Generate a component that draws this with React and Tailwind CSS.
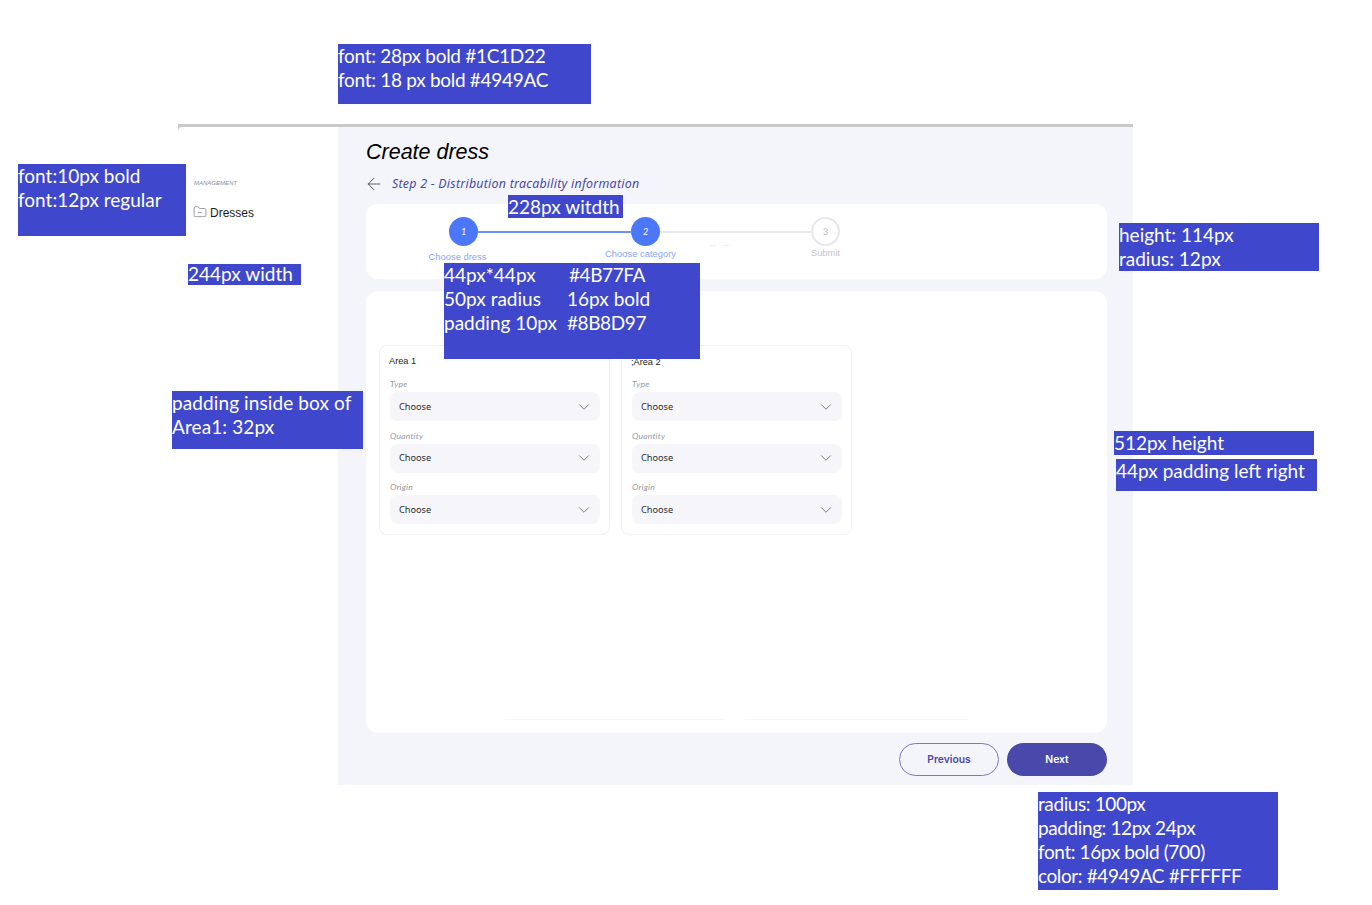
import React from "react";
import { ArrowLeft, ChevronDown, FolderMinus } from "lucide-react";

const notes = [
  { c: "left-[338px] top-[44px] w-[253px] h-[60px] leading-[24px]", t: ["font: 28px bold #1C1D22", "font: 18 px bold #4949AC"], k: "tracking-[-0.3px]" },
  { c: "left-[18px] top-[164px] w-[168px] h-[72px] leading-[24px]", t: ["font:10px bold", "font:12px regular"] },
  { c: "left-[188px] top-[264px] w-[113px] h-[21px] leading-[20px]", t: ["244px width"] },
  { c: "left-[508px] top-[195px] w-[115px] h-[23px] leading-[23px]", t: ["228px witdth"] },
  { c: "left-[172px] top-[391px] w-[191px] h-[58px] leading-[24px]", t: ["padding inside box of", "Area1: 32px"], k: "tracking-[0.1px]" },
  { c: "left-[1119px] top-[223px] w-[200px] h-[48px] leading-[24px]", t: ["height: 114px", "radius: 12px"] },
  { c: "left-[1114px] top-[431px] w-[200px] h-[24px] leading-[24px]", t: ["512px height"] },
  { c: "left-[1116px] top-[459px] w-[201px] h-[32px] leading-[24px]", t: ["44px padding left right"] },
  { c: "left-[1038px] top-[792px] w-[240px] h-[98px] leading-[24px]", t: ["radius: 100px", "padding: 12px 24px", "font: 16px bold (700)", "color: #4949AC #FFFFFF"], k: "tracking-[-0.4px]" },
];

const noteBase = "absolute z-10 bg-[#3f48cc] text-white text-[19px] whitespace-pre font-['Lato',sans-serif]";

function Note({ c, t, k = "" }) {
  return (
    <div className={`${noteBase} ${k} ${c}`}>
      {t.map((l) => (
        <div key={l}>{l}</div>
      ))}
    </div>
  );
}

function Field({ label, last }) {
  return (
    <div className={last ? "" : "mb-[10.5px]"}>
      <div className="text-[8.5px] leading-[8px] italic text-[#96979f] font-['Lato',sans-serif] h-[12px] tracking-[0.2px]">{label}</div>
      <div className="flex items-center justify-between h-[29px] -mr-[1px] rounded-lg bg-[#f5f5fa] pl-[9px] pr-[7px]">
        <span className="text-[9.2px] text-[#2c2d33] font-['Noto_Sans',sans-serif]">Choose</span>
        <ChevronDown size={18} strokeWidth={1} className="text-[#53545c]" />
      </div>
    </div>
  );
}

function Area({ title, titleClass }) {
  return (
    <div className="w-[231px] h-[190px] rounded-lg border border-[#f1f1f4] bg-white px-[10px]">
      <div className={`text-[9.2px] leading-[11px] text-[#1c1d22] font-['Liberation_Sans',sans-serif] h-[34px] -ml-[1px] ${titleClass}`}>{title}</div>
      <Field label="Type" />
      <Field label="Quantity" />
      <Field label="Origin" last />
    </div>
  );
}

function Step({ n, label, state, labelClass }) {
  const active = state === "active";
  return (
    <div className="relative w-[29px] flex flex-col items-center">
      <div
        className={
          active
            ? "w-[29px] h-[29px] rounded-full bg-[#4b77fa] text-white flex items-center justify-center text-[9px] italic font-['Lato',sans-serif]"
            : "w-[29px] h-[29px] rounded-full border-2 border-[#e7e7ee] bg-white text-[#b9bac2] flex items-center justify-center text-[9px] font-['Lato',sans-serif]"
        }
      >
        {n}
      </div>
      <div className={`whitespace-nowrap text-[9.4px] leading-[10px] font-['Liberation_Sans',sans-serif] ${active ? "text-[#8aa5fb]" : "text-[#c4c5cc]"} ${labelClass}`}>
        {label}
      </div>
    </div>
  );
}

export default function App() {
  return (
    <div className="relative w-[1372px] h-[905px] bg-white overflow-hidden pt-[124px] pl-[178px]">
      {notes.map((n, i) => (
        <Note key={i} {...n} />
      ))}
      <div className={`${noteBase} leading-[24px] left-[444px] top-[263px] w-[256px] h-[96px]`}>
        <div>44px*44px<span className="absolute left-[125px] tracking-[-0.4px]">#4B77FA</span></div>
        <div>50px radius<span className="absolute left-[123px]">16px bold</span></div>
        <div>padding 10px<span className="absolute left-[123px] tracking-[-0.4px]">#8B8D97</span></div>
      </div>
      <div className="w-[955px] h-[3px] bg-[#c9c9c9]" />
      <div className="flex w-[955px] h-[658px] bg-[#d8d8d8]">
        <aside className="w-[160px] bg-white rounded-tl-[5px] pl-[16px] pt-[53px]">
          <div className="text-[6px] leading-[7px] italic text-[#8b8d97] font-['Liberation_Sans',sans-serif]">MANAGEMENT</div>
          <div className="flex items-center gap-[3px] -ml-[1px] mt-[19px] text-[12px] leading-[14px] text-[#1c1d22] font-['Liberation_Sans',sans-serif]">
            <FolderMinus size={14} strokeWidth={1.1} className="text-[#6b6c74] -mt-[3px]" />
            <span>Dresses</span>
          </div>
        </aside>
        <main className="w-[795px] bg-[#f4f5fa] pl-[28px] pr-[26px]">
          <h1 className="pt-[11px] text-[21.5px] leading-[28px] italic text-black font-['Liberation_Sans',sans-serif]">Create dress</h1>
          <div className="flex items-center gap-[8px] -ml-[2px] mt-[9px] h-[18px]">
            <ArrowLeft size={20} strokeWidth={1} className="text-[#44454c]" />
            <span className="text-[12.4px] italic tracking-[0.25px] whitespace-pre text-[#4949ac] font-['Noto_Sans',sans-serif]">Step 2 - Distribution tracability information</span>
          </div>
          <section className="mt-[11px] h-[75px] rounded-xl bg-white pl-[83px] pt-[13px] relative">
            <div className="flex items-start">
              <Step n="1" label="Choose dress" state="active" labelClass="mt-[6px] -translate-x-[6px]" />
              <div className="w-[153px] h-[2px] mt-[14px] bg-[#6c90fb]" />
              <Step n="2" label="Choose category" state="active" labelClass="mt-[3px] -translate-x-[5px]" />
              <div className="w-[151px] h-[2px] mt-[14px] bg-[#e7e7ee]" />
              <Step n="3" label="Submit" state="todo" labelClass="mt-[2px]" />
            </div>
            <svg className="absolute left-[344px] top-[40px]" width="20" height="4" viewBox="0 0 20 4" fill="none" stroke="#dedee4" strokeWidth="0.6">
              <path d="M0 1q3 2 6 0M13 1q3 2 6 0" />
            </svg>
          </section>
          <section className="mt-[12px] h-[442px] rounded-xl bg-white pl-[13px] pt-[54px]">
            <div className="flex gap-[11px]">
              <Area title="Area 1" titleClass="pt-[10px]" />
              <Area title=";Area 2" titleClass="pt-[11px]" />
            </div>
            <div className="flex gap-[20px] mt-[184px] ml-[126px]">
              <div className="w-[220px] h-px bg-[#f6f6f6]" />
              <div className="w-[223px] h-px bg-[#f6f6f6]" />
            </div>
          </section>
          <div className="flex justify-end gap-[8px] mt-[10px] font-['Inter',sans-serif] text-[10.3px] font-semibold">
            <button className="w-[100px] h-[33px] rounded-full border border-[#7a78cc] text-[#4949ac]">Previous</button>
            <button className="w-[100px] h-[33px] rounded-full bg-[#4949ac] text-white">Next</button>
          </div>
        </main>
      </div>
    </div>
  );
}
